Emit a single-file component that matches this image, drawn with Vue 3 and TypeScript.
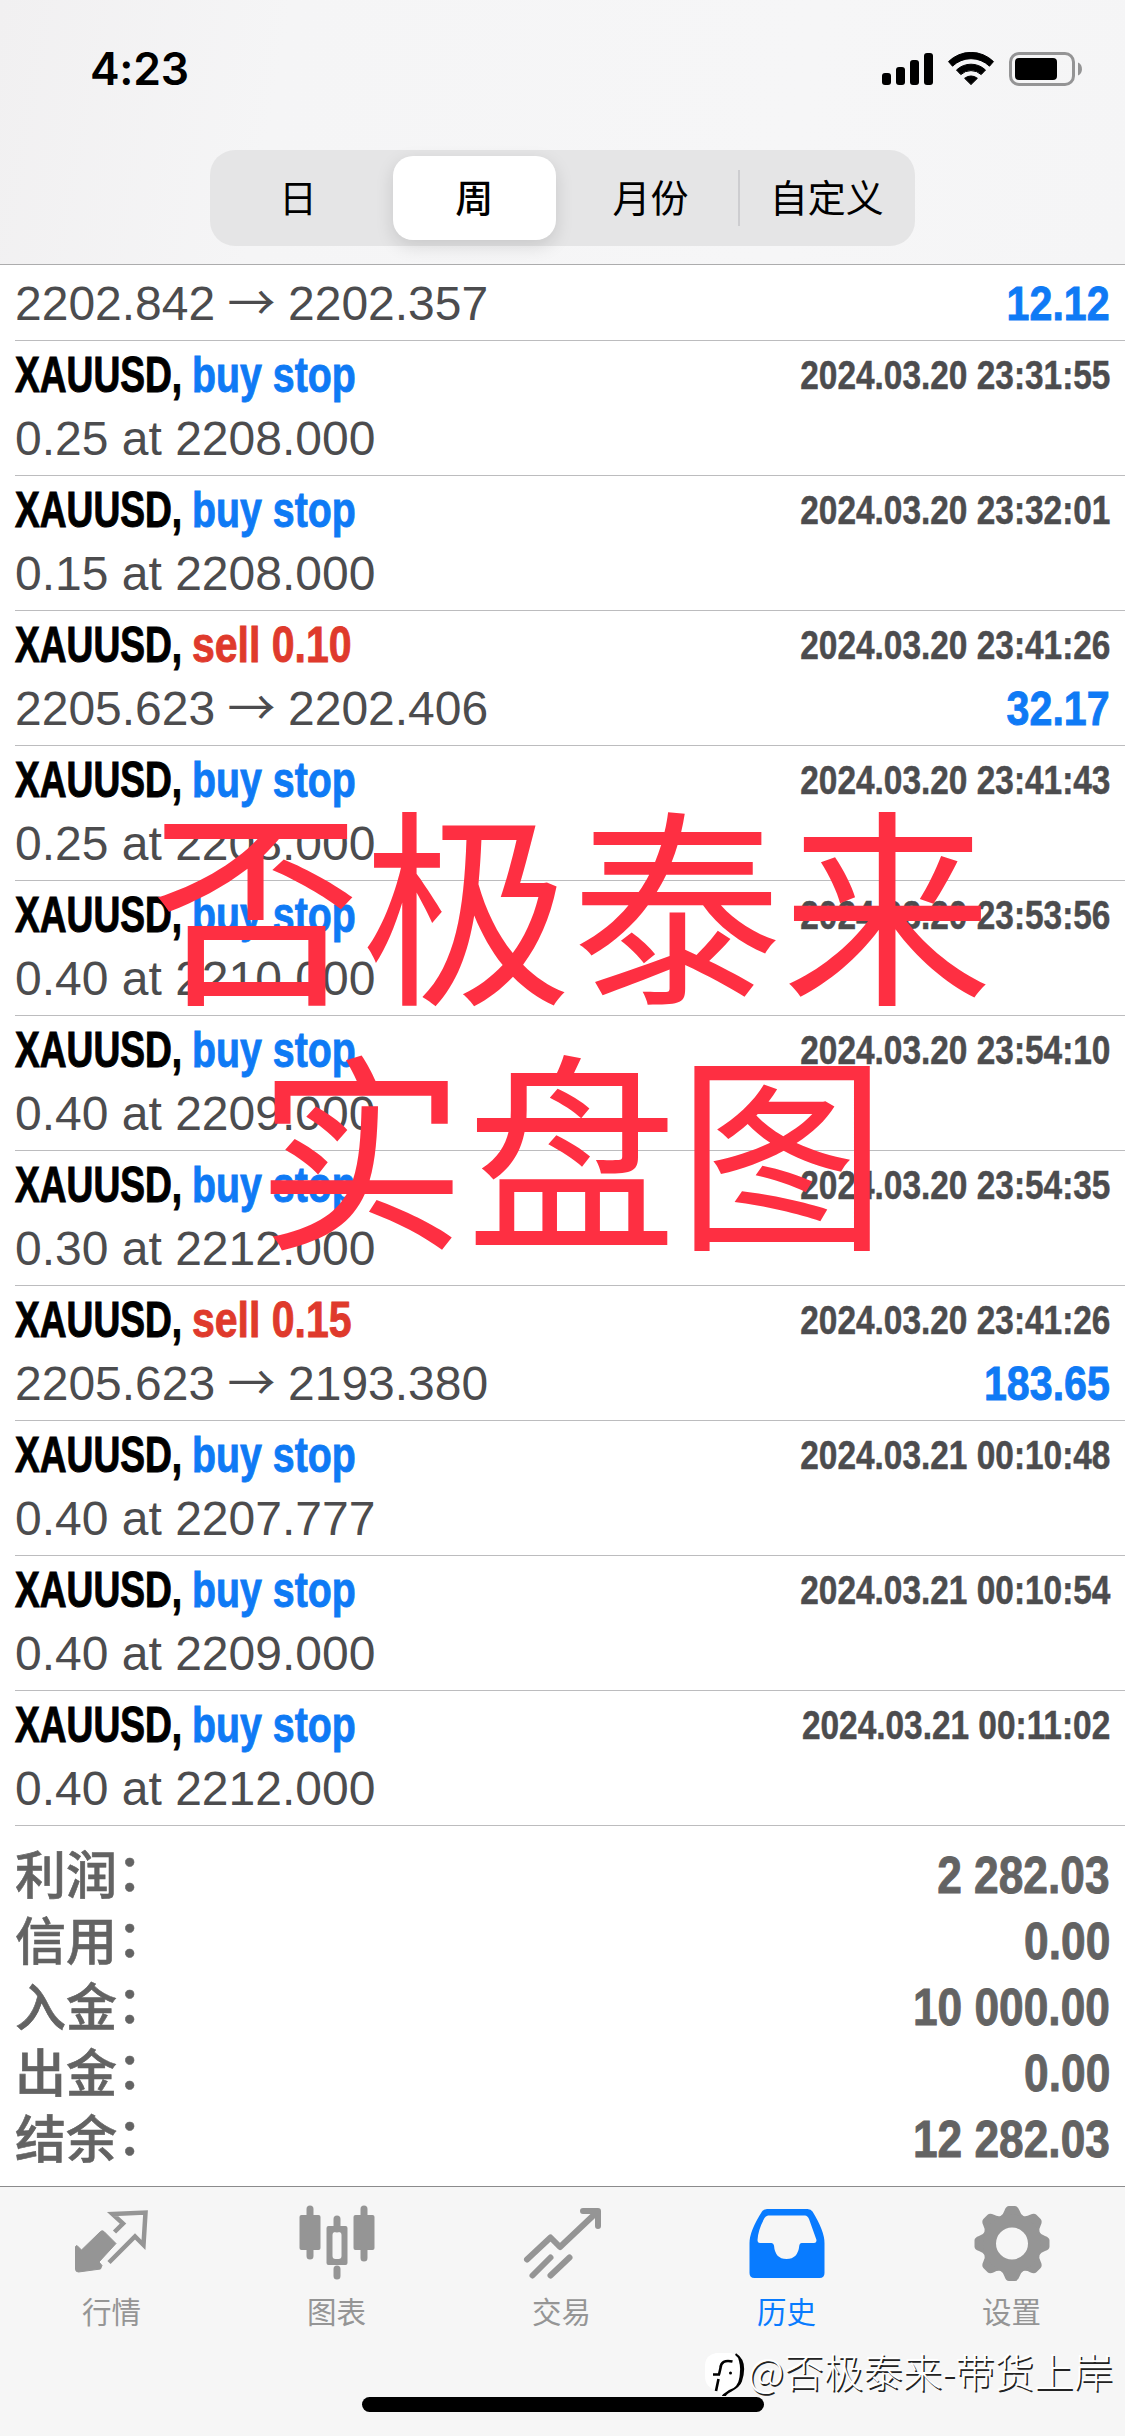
<script setup lang="ts">
interface Deal {
  action: string
  side: 'buy' | 'sell'
  time: string
  detail?: string
  from?: string
  to?: string
  profit?: string
}

const order = (volume: string, price: string, time: string): Deal => ({
  action: 'buy stop',
  side: 'buy',
  time,
  detail: `${volume} at ${price}`,
})

const deals: Deal[] = [
  order('0.25', '2208.000', '2024.03.20 23:31:55'),
  order('0.15', '2208.000', '2024.03.20 23:32:01'),
  { action: 'sell 0.10', side: 'sell', time: '2024.03.20 23:41:26', from: '2205.623', to: '2202.406', profit: '32.17' },
  order('0.25', '2208.000', '2024.03.20 23:41:43'),
  order('0.40', '2210.000', '2024.03.20 23:53:56'),
  order('0.40', '2209.000', '2024.03.20 23:54:10'),
  order('0.30', '2212.000', '2024.03.20 23:54:35'),
  { action: 'sell 0.15', side: 'sell', time: '2024.03.20 23:41:26', from: '2205.623', to: '2193.380', profit: '183.65' },
  order('0.40', '2207.777', '2024.03.21 00:10:48'),
  order('0.40', '2209.000', '2024.03.21 00:10:54'),
  order('0.40', '2212.000', '2024.03.21 00:11:02'),
]

const totals = [
  { label: '利润', value: '2 282.03' },
  { label: '信用', value: '0.00' },
  { label: '入金', value: '10 000.00' },
  { label: '出金', value: '0.00' },
  { label: '结余', value: '12 282.03' },
]

const periods = ['日', '周', '月份', '自定义']
const activePeriod = '周'
</script>

<template>
  <div class="screen">
    <header class="top">
      <div class="status">
        <span class="clock">4:23</span>
        <svg class="indicators" width="202" height="36" viewBox="0 0 202 36">
          <rect x="0" y="21" width="9" height="12" rx="3" />
          <rect x="14" y="15" width="9" height="18" rx="3" />
          <rect x="28" y="8" width="9" height="25" rx="3" />
          <rect x="42" y="1" width="9" height="32" rx="3" />
          <path d="M66.5 9.6a32 32 0 0 1 45 0l-4 4.6a26.500 26.500 0 0 0-37 0z" stroke="#000" stroke-width="1" stroke-linejoin="round" />
          <path d="M74.500 18a21 21 0 0 1 29 0l-4.300 4.600a15 15 0 0 0-20.400 0z" stroke="#000" stroke-width="1" stroke-linejoin="round" />
          <path d="M82.600 26.300a10 10 0 0 1 12.800 0L89 32.600z" stroke="#000" stroke-width="1" stroke-linejoin="round" />
          <rect x="128.500" y="1.500" width="63" height="31" rx="8.500" fill="none" stroke="#949495" stroke-width="3" />
          <rect x="133" y="6" width="42" height="22" rx="4" />
          <path d="M196 10.500c5.300 2 5.300 11 0 13z" fill="#949495" />
        </svg>
      </div>
      <nav class="segments">
        <span v-for="p in periods" :key="p" class="segment" :class="{ active: p === activePeriod }">{{ p }}</span>
      </nav>
    </header>

    <main class="list">
      <section class="row partial">
        <div class="line">
          <span class="move"><span class="price">2202.842</span><span class="arrow">→</span><span class="price">2202.357</span></span>
          <b class="profit">12.12</b>
        </div>
      </section>
      <section v-for="(d, i) in deals" :key="i" class="row">
        <div class="line">
          <b class="symbol">XAUUSD,</b>
          <b class="action" :class="d.side">{{ d.action }}</b>
          <b class="time">{{ d.time }}</b>
        </div>
        <div class="line second">
          <span v-if="d.detail" class="detail">{{ d.detail }}</span>
          <span v-else class="move"><span class="price">{{ d.from }}</span><span class="arrow">→</span><span class="price">{{ d.to }}</span></span>
          <b v-if="d.profit" class="profit">{{ d.profit }}</b>
        </div>
      </section>
      <section class="totals">
        <div v-for="t in totals" :key="t.label" class="total">
          <span class="label">{{ t.label }}<span class="colon">：</span></span>
          <b class="value">{{ t.value }}</b>
        </div>
      </section>
    </main>

    <footer class="tabs">
      <div class="tab">
        <svg width="80" height="80" viewBox="0 0 80 80">
          <path d="M32 22.500L44 34.500 27 53 30 56.500 28.500 60 6.500 63Q3.500 63 3.500 60V37.500L5 36.500 9.500 41 28.500 22.500Q30 21 32 22.500z" stroke="#959595" stroke-width="1" stroke-linejoin="round" />
          <path d="M42.500 23l8.500-8.500-10.500-9.500L73.500 3.500 71.500 36 63 27.500 37 53.500" fill="none" stroke="#959595" stroke-width="4.500" />
        </svg>
        <span>行情</span>
      </div>
      <div class="tab">
        <svg width="80" height="80" viewBox="0 0 80 80">
          <path d="M13 0v47M67 0v49M40 10v10M40 60v7" stroke="#959595" stroke-width="7" stroke-linecap="round" />
          <rect x="2.500" y="6" width="21" height="35" rx="2" />
          <rect x="56.500" y="6" width="21" height="35" rx="2" />
          <path fill-rule="evenodd" d="M31.500 17H48.500Q50.500 17 50.500 19V54Q50.500 56 48.500 56H31.500Q29.500 56 29.500 54V19Q29.500 17 31.500 17zM38.500 23Q35.500 23 35.500 26V47Q35.500 50 38.500 50H41.500Q44.500 50 44.500 47V26Q44.500 23 41.500 23z" />
        </svg>
        <span>图表</span>
      </div>
      <div class="tab">
        <svg width="80" height="80" viewBox="0 0 80 80">
          <path d="M5 50.500L28.500 28.500 38 38 74.500 3.500M61 2h15v15M10.500 66.500L28.500 48.500M28.500 66.500L47.500 48.500" fill="none" stroke="#959595" stroke-width="6" stroke-linecap="round" stroke-linejoin="round" />
        </svg>
        <span>交易</span>
      </div>
      <div class="tab current">
        <svg width="80" height="80" viewBox="0 0 80 80">
          <path fill-rule="evenodd" d="M20 0H60.500Q64 0 65.500 2.500 77.500 22 77.500 34V64Q77.500 69 72.500 69H7.500Q2.500 69 2.500 64V34Q2.500 22 15 2.500 16.500 0 20 0zM21 6.500Q18.500 7 17.500 9 11 21 10.500 31 10.500 34 13 34H24.500Q26.500 34 27 36.500 28 50 39.500 50 51 50 52.300 36.500 52.500 34 54.500 34H67Q69.500 34 69.500 31L62 10Q60.500 6.500 58 6.500z" />
        </svg>
        <span>历史</span>
      </div>
      <div class="tab">
        <svg width="80" height="80" viewBox="0 0 80 80">
          <g transform="translate(40 34.500)">
            <path v-for="n in 8" :key="n" :transform="`rotate(${n * 45})`" d="M-12-27Q-8.500-29-7.500-33-6-37.500-3-37.500H3Q6-37.500 7.500-33 8.500-29 12-27L8-20H-8z" />
            <circle r="22.500" fill="none" stroke="#959595" stroke-width="13" />
          </g>
        </svg>
        <span>设置</span>
      </div>
      <div class="home"></div>
    </footer>

    <div class="stamp">
      <div>否极泰来</div>
      <div>实盘图</div>
    </div>

    <div class="credit">
      <svg width="42" height="46" viewBox="0 0 42 46">
        <path d="M31 3C39 8 39.500 18 36 29 33 38 20 38 20 44" fill="none" stroke="#000" stroke-width="4" />
        <path d="M12 1H27Q36 3 35.500 15V25Q34 36 25 38L18 43 13 38Q1 36 1 24V12Q2 3 12 1z" fill="#fff" />
        <path d="M28.500 9.500Q17 7 16.500 16L15 22.500M9 22.500H16M14.500 27L12 39" fill="none" stroke="#000" stroke-width="2.600" />
        <circle cx="26.500" cy="21" r="1.500" />
      </svg>
      <span>@否极泰来-带货上岸</span>
    </div>
  </div>
</template>

<style>
body {
  background: #fff;
}
</style>

<style scoped>
.screen {
  position: relative;
  display: flex;
  flex-direction: column;
  box-sizing: border-box;
  width: 1125px;
  height: 2436px;
  overflow: hidden;
  background: #fff;
  color: #4c4c4e;
  font-family: "Liberation Sans", "Noto Sans CJK SC", sans-serif;
}
.top {
  box-sizing: border-box;
  height: 265px;
  flex: none;
  border-bottom: 1px solid #acacad;
  background: linear-gradient(100deg, #f1f0f1, #f5f5f6 25%, #f6f6f7 70%, #f5f5f6);
}
.status {
  display: flex;
  justify-content: space-between;
  box-sizing: border-box;
  height: 150px;
  padding: 52px 41px 0 90px;
}
.clock {
  color: #000;
  font: 600 44.500px/35px Inter, sans-serif;
  letter-spacing: -0.3px;
}
.segments {
  display: flex;
  box-sizing: border-box;
  width: 705px;
  height: 96px;
  margin-left: 210px;
  padding: 6px 0;
  border-radius: 25px;
  background: #e5e5e6;
}
.segment {
  flex: 1;
  height: 84px;
  margin: 0 7px;
  color: #000;
  font: 400 38px/80px "Noto Sans CJK SC", sans-serif;
  text-align: center;
  white-space: nowrap;
}
.segment.active {
  border-radius: 20px;
  background: #fff;
  box-shadow: 0 6px 18px rgba(0, 0, 0, 0.13);
  font-weight: 500;
}
.segment:last-child {
  position: relative;
}
.segment:last-child::before {
  content: "";
  position: absolute;
  top: 14px;
  left: -8px;
  width: 2px;
  height: 56px;
  background: #cdcdd0;
}
.list {
  flex: none;
  height: 1921px;
}
.row {
  box-sizing: border-box;
  height: 135px;
  margin-left: 15px;
  padding: 4px 15px 0 0;
  border-bottom: 1px solid #bcbcbe;
}
.row.partial {
  height: 76px;
  padding-top: 9px;
}
.line {
  display: flex;
  height: 60px;
  font-size: 50px;
  line-height: 60px;
  white-space: nowrap;
}
.second {
  margin-top: 4px;
}
.symbol {
  width: 177px;
  color: #000;
  transform: scaleX(0.743);
  transform-origin: left;
  -webkit-text-stroke: 1px currentColor;
}
.action {
  width: 170px;
  transform: scaleX(0.786);
  transform-origin: left;
  -webkit-text-stroke: 0.9px currentColor;
}
.buy {
  color: #0f7af5;
}
.sell {
  color: #df3a2c;
  transform: scaleX(0.82);
}
.time {
  margin-left: auto;
  font-size: 40px;
  line-height: 60px;
  transform: scaleX(0.835);
  transform-origin: right;
  -webkit-text-stroke: 0.5px currentColor;
}
.detail {
  font-size: 48px;
}
.move {
  display: flex;
  font-size: 48px;
}
.price {
  width: 200px;
}
.arrow {
  width: 73px;
  font-family: "Noto Sans CJK SC", sans-serif;
  line-height: 51px;
  text-align: center;
}
.profit {
  margin-left: auto;
  color: #0f7af5;
  font-size: 49px;
  line-height: 58px;
  transform: scaleX(0.84);
  transform-origin: right;
  -webkit-text-stroke: 0.9px currentColor;
}
.totals {
  padding: 16px 15px 0;
}
.total {
  display: flex;
  justify-content: space-between;
  height: 66px;
  color: #636363;
  line-height: 67px;
}
.label {
  font: 500 51px/60px "Noto Sans CJK SC", sans-serif;
  -webkit-text-stroke: 0.6px currentColor;
}
.colon {
  position: relative;
  top: -3px;
}
.value {
  font-size: 51px;
  transform: scaleX(0.868);
  transform-origin: right;
  -webkit-text-stroke: 0.9px currentColor;
}
.tabs {
  display: flex;
  flex: none;
  position: relative;
  box-sizing: border-box;
  height: 250px;
  border-top: 1px solid #8b8b8c;
  background: #f6f6f6;
}
.tab {
  display: flex;
  flex: none;
  flex-direction: column;
  align-items: center;
  box-sizing: border-box;
  width: 225px;
  padding: 22px 2px 0 0;
  color: #959595;
  font: 400 29.500px/42px "Noto Sans CJK SC", sans-serif;
}
.tab svg {
  overflow: visible;
  fill: currentColor;
}
.current {
  color: #087bff;
}
.home {
  position: absolute;
  left: 362px;
  bottom: 24px;
  width: 402px;
  height: 15px;
  border-radius: 8px;
  background: #000;
}
.stamp {
  position: absolute;
  top: 775px;
  left: 0;
  width: 1143px;
  color: #fe2f42;
  font: 400 210.500px/245px "Noto Sans CJK SC", sans-serif;
  text-align: center;
}
.credit {
  display: flex;
  position: absolute;
  top: 2352px;
  left: 704px;
  color: #fff;
  font: 300 39.500px/35px "Noto Sans CJK SC", sans-serif;
  text-shadow: 1.500px 1.500px 0 #222;
  white-space: nowrap;
}
.credit svg {
  margin-right: 2px;
}
</style>
